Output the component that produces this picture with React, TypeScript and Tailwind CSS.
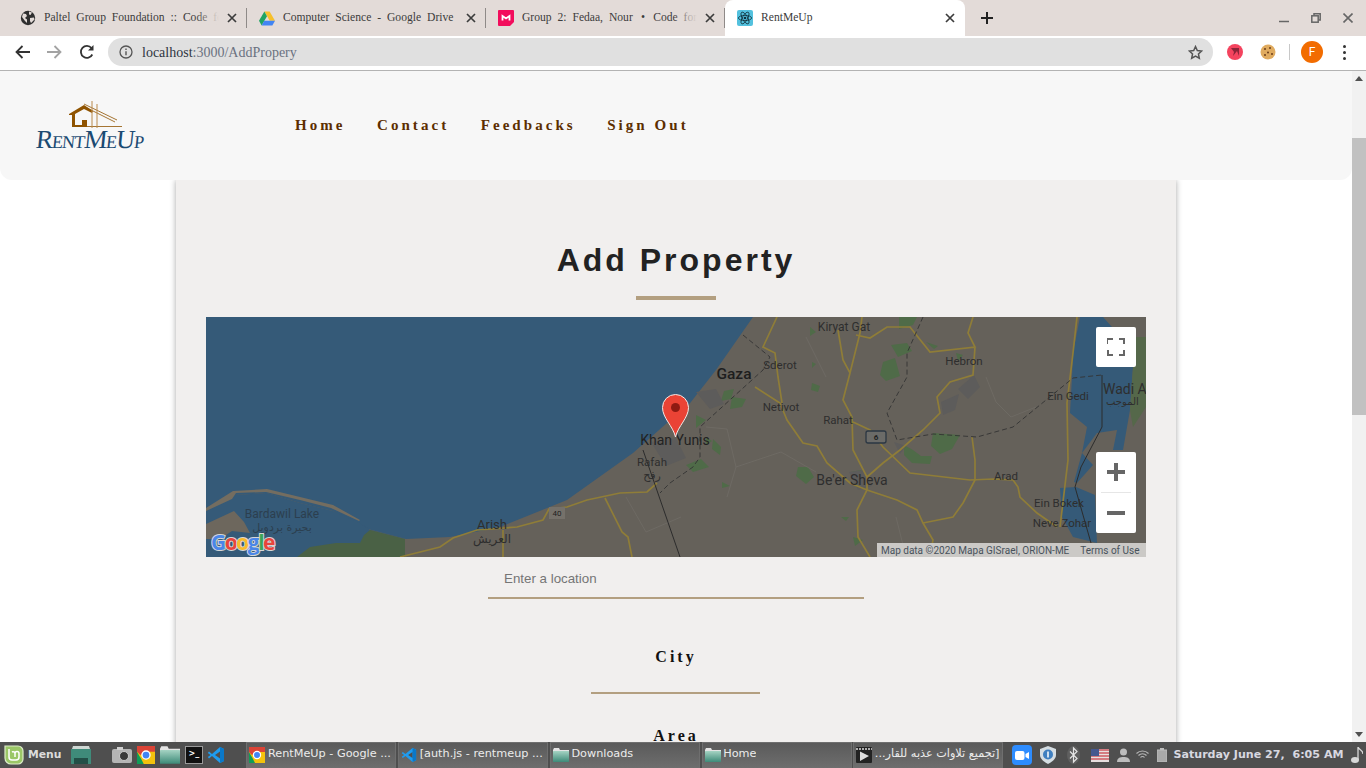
import React from 'react';

const serif = "font-['Liberation_Serif',serif]";

const CloseX = () => (
  <svg width="10" height="10" viewBox="0 0 10 10" className="shrink-0">
    <path d="M1 1l8 8M9 1l-8 8" stroke="#3c3c3c" strokeWidth="1.7" fill="none" />
  </svg>
);

const GlobeIcon = () => (
  <svg width="16" height="16" viewBox="0 0 16 16">
    <circle cx="8" cy="8" r="7.2" fill="#2f2f2f" />
    <path d="M3 3.500l3 .5 1 2-2 2 2 1.500v3.500L5 11 2 7zM9 1.500l3 1-1.500 2.500L9 4.500zM10 8l4-.5.5 2L11 13l-1-2z" fill="#e3dbd8" />
  </svg>
);

const DriveIcon = () => (
  <svg width="17" height="15" viewBox="0 0 17 15">
    <path d="M5.700 0h5.600l5.700 10h-5.600z" fill="#f6c02c" />
    <path d="M5.700 0L0 10l2.800 5 5.700-10z" fill="#1fa463" />
    <path d="M2.800 15h11.400l2.800-5H5.600z" fill="#4285f4" />
  </svg>
);

const MiroIcon = () => (
  <svg width="16" height="16" viewBox="0 0 16 16">
    <path d="M1 0h14a1 1 0 0 1 1 1v11l-4 4H1a1 1 0 0 1-1-1V1a1 1 0 0 1 1-1z" fill="#f20d5c" />
    <path d="M4.500 10.500V6L8 8.500 11.500 6v4.500" stroke="#fff" strokeWidth="1.800" fill="none" />
  </svg>
);

const ReactIcon = () => (
  <svg width="16" height="16" viewBox="0 0 16 16">
    <rect width="16" height="16" rx="2" fill="#53c1de" />
    <g fill="none" stroke="#10303c" strokeWidth="0.8">
      <ellipse cx="8" cy="8" rx="6.600" ry="2.600" />
      <ellipse cx="8" cy="8" rx="6.600" ry="2.600" transform="rotate(60 8 8)" />
      <ellipse cx="8" cy="8" rx="6.600" ry="2.600" transform="rotate(120 8 8)" />
    </g>
    <circle cx="8" cy="8" r="1.300" fill="#10303c" />
  </svg>
);

const ChromeIcon = ({ size = 16 }: { size?: number }) => (
  <svg width={size} height={size} viewBox="0 0 16 16">
    <rect width="16" height="16" fill="#f4c20d" />
    <path d="M0 0h16v5H8L3 8 0 5z" fill="#db4437" />
    <path d="M0 5l4 7 2 4H0z" fill="#0f9d58" />
    <circle cx="8" cy="8" r="3.600" fill="#4285f4" stroke="#fff" strokeWidth="1.200" />
  </svg>
);

const VsCodeIcon = ({ size = 18 }: { size?: number }) => (
  <svg width={size} height={size} viewBox="0 0 18 18">
    <path d="M13 1l4 2v12l-4 2-8-7-3 2.500L.8 11 3.500 9 .8 7 2 5.500 5 8z" fill="#1f9cf0" />
    <path d="M13 5.500L8 9l5 3.500z" fill="#4f4f4f" />
    <path d="M13 1l4 2v12l-4 2z" fill="#0a78c8" />
  </svg>
);

const FolderIcon = ({ w = 16, h = 14 }: { w?: number; h?: number }) => (
  <svg width={w} height={h} viewBox="0 0 16 14">
    <path d="M0 2l1-2h5l1 2h9v2H0z" fill="#e4e4e4" />
    <defs>
      <linearGradient id="folderGrad" x1="0" y1="0" x2="0" y2="1">
        <stop offset="0" stopColor="#a5d3c3" />
        <stop offset="1" stopColor="#3d8a78" />
      </linearGradient>
    </defs>
    <rect y="3" width="16" height="11" rx="0.500" fill="url(#folderGrad)" />
  </svg>
);

const Tab = ({ icon, title, active, fade }: { icon: React.ReactNode; title: string; active?: boolean; fade?: boolean }) => (
  <div className={`relative h-[36px] flex items-center pl-[12px] pr-[10px] ${active ? 'bg-white rounded-t-[8px] w-[240px]' : 'w-[239px]'}`}>
    <div className="w-[16px] h-[16px] shrink-0 flex items-center justify-center">{icon}</div>
    <div className="relative ml-[8px] mr-[6px] w-[176px] overflow-hidden whitespace-nowrap text-[11.6px] leading-[16px] pb-[1px] text-[#3c3c3c] [word-spacing:3px]">
      {title}
      {fade && <div className="absolute right-0 top-0 bottom-0 w-[24px] bg-gradient-to-r from-transparent to-[#e3dbd8]" />}
    </div>
    <div className="ml-[2px]">
      <CloseX />
    </div>
    {!active && <div className="absolute right-0 top-[8px] h-[20px] w-px bg-[#8f8a88]" />}
  </div>
);

const TabStrip = () => (
  <div className={`h-[36px] bg-[#e3dbd8] flex items-center pl-[8px] ${serif}`}>
    <Tab icon={<GlobeIcon />} title="Paltel Group Foundation :: Code for Everyone" fade />
    <Tab icon={<DriveIcon />} title="Computer Science - Google Drive" />
    <Tab icon={<MiroIcon />} title={'Group 2: Fedaa, Nour \u2009•\u2009 Code for Gaza'} fade />
    <Tab icon={<ReactIcon />} title="RentMeUp" active />
    <svg width="14" height="14" viewBox="0 0 14 14" className="ml-[15px] mr-auto">
      <path d="M7 1v12M1 7h12" stroke="#222" strokeWidth="2" />
    </svg>
    <div className="flex items-center gap-[22px] pr-[13px]">
      <svg width="10" height="10" viewBox="0 0 10 10"><path d="M0 8.500h10" stroke="#666" strokeWidth="1.500" /></svg>
      <svg width="10" height="10" viewBox="0 0 10 10" fill="none" stroke="#666" strokeWidth="1.500">
        <path d="M3 2.500V.8h6.200V7H7.500" />
        <rect x="0.800" y="2.800" width="6.400" height="6.400" />
      </svg>
      <svg width="10" height="10" viewBox="0 0 10 10"><path d="M.5.500l9 9M9.500.5l-9 9" stroke="#666" strokeWidth="1.600" /></svg>
    </div>
  </div>
);

const Toolbar = () => (
  <div className="h-[35px] pb-[2px] bg-white border-b border-[#b3b3b3] flex items-center">
    <div className="flex items-center pl-[15px] gap-[17px]">
      <svg width="15" height="14" viewBox="0 0 15 14" fill="none" stroke="#333" strokeWidth="1.800"><path d="M15 7H1.500M7.500 1l-6 6 6 6" /></svg>
      <svg width="15" height="14" viewBox="0 0 15 14" fill="none" stroke="#a3a3a3" strokeWidth="1.800"><path d="M0 7h13.500M7.500 1l6 6-6 6" /></svg>
      <svg width="16" height="16" viewBox="0 0 16 16" fill="none"><path d="M13.300 10.500A6 6 0 1 1 12.500 4" stroke="#333" strokeWidth="1.800" /><path d="M14.500 1v5.500H9z" fill="#333" /></svg>
    </div>
    <div className="ml-[13px] w-[1105px] h-[28px] rounded-full bg-[#e0e0e0] flex items-center pl-[11px] pr-[10px]">
      <svg width="14" height="14" viewBox="0 0 14 14" fill="none">
        <circle cx="7" cy="7" r="6" stroke="#555" strokeWidth="1.300" />
        <path d="M7 6.200v4M7 3.500v1.500" stroke="#555" strokeWidth="1.400" />
      </svg>
      <div className={`ml-[9px] text-[14px] text-[#6b7280] mr-auto ${serif}`}>
        <span className="text-[#2f3540]">localhost</span>:3000/AddPropery
      </div>
      <svg width="15" height="15" viewBox="0 0 24 24" fill="none" stroke="#555" strokeWidth="2.400">
        <path d="M12 2.500l2.900 6.300 6.900.8-5.100 4.700 1.400 6.800L12 17.700l-6.100 3.400 1.400-6.800L2.200 9.600l6.900-.8z" />
      </svg>
    </div>
    <div className="ml-[14px] w-[16px] h-[16px] rounded-full bg-[#f4435e] flex items-center justify-center">
      <svg width="10" height="10" viewBox="0 0 10 10"><path d="M1 1h8v8L7 4 3 9 4 5z" fill="#8c2438" /></svg>
    </div>
    <svg width="16" height="16" viewBox="0 0 16 16" className="ml-[17px]">
      <circle cx="8" cy="8" r="7.500" fill="#e0ab5f" />
      <circle cx="5" cy="5" r="1" fill="#6b3d1a" /><circle cx="10" cy="4" r="1" fill="#6b3d1a" />
      <circle cx="8" cy="8.500" r="1" fill="#6b3d1a" /><circle cx="12" cy="10" r="1" fill="#6b3d1a" />
      <circle cx="5" cy="11" r="1" fill="#6b3d1a" />
    </svg>
    <div className="ml-[13px] w-px h-[16px] bg-[#c8c8c8]" />
    <div className="ml-[11px] w-[22px] h-[22px] rounded-full bg-[#f26c00] text-white flex items-center justify-center text-[12px] font-['Roboto',sans-serif]">F</div>
    <div className="ml-[20px] flex flex-col gap-[3px]">
      <div className="w-[3px] h-[3px] rounded-full bg-[#333]" />
      <div className="w-[3px] h-[3px] rounded-full bg-[#333]" />
      <div className="w-[3px] h-[3px] rounded-full bg-[#333]" />
    </div>
  </div>
);

const Logo = () => (
  <div className="w-[108px] flex flex-col items-start">
    <svg width="56" height="31" viewBox="0 2 56 31" className="ml-[32px] -mb-[3px]">
      <path d="M1 15L16 6l9 6-1 2-8-4-9 5v11h7v-5h5v7H4V16H1z" fill="#8f5300" />
      <path d="M16 5l33 16M17 8l30 15M11 27.500h43" stroke="#8f5300" strokeWidth="0.800" fill="none" />
      <path d="M24 0v29M29 5v24" stroke="#b98a4d" strokeWidth="1" fill="none" />
    </svg>
    <div className="leading-[22px] text-[26px] text-[#1b4a72] font-['Liberation_Serif',serif] [font-variant:small-caps] -skew-x-6 tracking-[-1px] whitespace-nowrap">
      RentMeUp
    </div>
  </div>
);

const Header = () => (
  <div className="relative z-10 h-[109px] bg-[#f7f7f7] rounded-b-[12px] flex items-center pl-[36px]">
    <Logo />
    <nav className={`ml-[151px] flex gap-[31.5px] text-[15px] font-bold tracking-[3.05px] text-[#5c2e00] ${serif}`}>
      <span>Home</span>
      <span>Contact</span>
      <span>Feedbacks</span>
      <span>Sign Out</span>
    </nav>
  </div>
);

const MapView = () => (
  <div className="relative w-[940px] h-[240px] overflow-hidden">
    <svg width="940" height="240" viewBox="0 0 940 240" className="block">
      <rect width="940" height="240" fill="#65615a" />
      {/* sea */}
      <path d="M0 0H547L510 53 481 90 461 106 427 136 361 183 294 210 244 220 200 222 154 210 127 194 94 186 61 176 27 178 0 194z" fill="#355a78" />
      <path d="M0 194L27 178 61 176 94 186 127 194 154 206 164 213 199 222V240H0z" fill="#355a78" />
      {/* land around the lagoon */}
      <path d="M0 191L27 174 61 172 94 180 127 188 154 203 153 204 125 191 94 183 60 175 30 176 26 182 0 194z" fill="#746d60" />
      <path d="M0 207L28 194 38 205 44 216 26 214 14 222 0 222z" fill="#6d675d" />
      <path d="M164 213L199 222V240H91L104 230 130 226 154 226 158 218z" fill="#4a6145" />
      {/* dead sea */}
      <path d="M874 0H897L906 10V45L927 50 924 93 917 133H890L876 136 881 110 864 96 866 60 867 36z" fill="#355a78" />
      <path d="M891 116L911 113 907 133 887 148 872 165 876 136z" fill="#65615a" />
      <path d="M876 136L887 148 871 166 868 165zM854 171L870 170 889 178 891 226 867 220 856 200z" fill="#355a78" />
      <path d="M927 20H940V90L927 110 924 93 927 50z" fill="#55684a" />
      {/* green areas */}
      <g fill="#4f6b48">
        <path d="M677 45l12-4 5 18-14 5-6-6zM685 28l16-2 5 8-14 6zM693 0h18l-4 8-14 4z" />
        <path d="M727 116l27 2-8 14-12 5-9-8zM698 128l9 5 8 6 11 0-2 8-18-1-8-8z" />
        <path d="M592 150l10 0 6 10-8 7-10-8zM518 74l10-2-3 10-10 2zM480 148l15-6 8 8-16 5zM490 98l10 5-10 8zM606 66l8 3-2 6-7-2zM604 10l6 5-6 4zM645 155l10-2 5 8-10 3zM507 122l8 8-1 8-8-6zM635 200l8 0-3 4zM647 220l10 3-8 6z" />
        <path d="M526 80l14 2-4 8-12 2zM500 120l6 4-6 4zM516 165l8 4-8 2zM606 45l4 2-4 4zM720 25l12 4-4 3zM750 36l7 2-5 6z" />
      </g>
      {/* built up grey */}
      <g fill="#5d5c5b">
        <path d="M490 75l20-3 8 15-14 5zM445 125l25-4 10 20-20 8zM643 155l15-2 8 16-14 4zM735 85l18-8-4 16-12 5zM752 72l16-14 6 12-12 12zM688 125l12 4-6 8z" />
      </g>
      {/* minor roads */}
      <g fill="none" stroke="#706c66" strokeWidth="0.800">
        <path d="M500 110L521 112 530 150 521 180M530 150L575 135 610 155M780 60L790 85 805 100 830 90M420 180L440 215 475 200M600 20L620 60M690 200L700 240" />
      </g>
      {/* roads */}
      <g fill="none" stroke="#8f7d38" strokeWidth="1.700">
        <path d="M549 70L574 86 581 103 597 126 611 129 621 146 644 166 661 173 691 183 711 193 717 206 727 223 724 240" />
        <path d="M571 0L557 30 569 36 572 60 576 86" />
        <path d="M632 13L637 43 644 56 654 16 656 0M644 56L637 83 646 100 647 133 661 160 661 173 651 193 652 220 664 240" />
        <path d="M647 105L664 113 677 130 704 156 764 163 787 162 807 163 812 170 814 180 831 196 851 210" />
        <path d="M767 0L762 16 769 30 724 35 704 10 681 10 664 21 650 18M769 30L767 58 744 65 731 80 734 96 717 113 694 133 677 146 661 160" />
        <path d="M766 120L769 143 769 163 757 186 747 200 717 206" />
        <path d="M871 0L867 36 861 86 862 143 854 210" />
        <path d="M194 240L234 230 247 221 271 213 311 210 337 203 343 192 361 190 381 183 414 176 441 175 451 166" />
        <path d="M399 181L416 215 422 220 426 240M297 213V240" />
      </g>
      {/* borders */}
      <path d="M437 133L474 240" stroke="#2c2c2c" strokeWidth="1" fill="none" />
      <path d="M896 58V110L875 150 869 170 885 226" stroke="#2c2c2c" strokeWidth="1" fill="none" />
      <g fill="none" stroke="#333" strokeWidth="0.900" strokeDasharray="5 3">
        <path d="M537 18L564 40 557 53 494 110 494 140 487 150 464 166 454 176" />
        <path d="M717 0L701 36 701 60 681 96 691 123 727 117 771 120 807 110 867 61 896 58" />
      </g>
      {/* labels */}
      <g fontFamily="Roboto, sans-serif" fill="#2e2e2e" textAnchor="middle">
        <text x="638" y="14" fontSize="12">Kiryat Gat</text>
        <text x="574" y="52" fontSize="11.500">Sderot</text>
        <text x="528" y="62" fontSize="15.500" fontWeight="500" fill="#1e1e1e">Gaza</text>
        <text x="758" y="48" fontSize="11.500">Hebron</text>
        <text x="575" y="94" fontSize="11.500">Netivot</text>
        <text x="632" y="107" fontSize="11.500">Rahat</text>
        <text x="646" y="168" fontSize="14">Be&apos;er Sheva</text>
        <text x="800" y="163" fontSize="11.500">Arad</text>
        <text x="862" y="83" fontSize="11.500">Ein Gedi</text>
        <text x="853" y="190" fontSize="11.500">Ein Bokek</text>
        <text x="856" y="210" fontSize="11.500">Neve Zohar</text>
        <text x="469" y="128" fontSize="14" fill="#222">Khan Yunis</text>
        <text x="446" y="149" fontSize="11.500">Rafah</text>
        <text x="446" y="162" fontSize="11" fontFamily="'DejaVu Sans', sans-serif">رفح</text>
        <text x="286" y="212" fontSize="13">Arish</text>
        <text x="286" y="226" fontSize="12" fontFamily="'DejaVu Sans', sans-serif">العريش</text>
        <text x="76" y="201" fontSize="12" fill="#2c3f4f">Bardawil Lake</text>
        <text x="76" y="214" fontSize="11" fill="#2c3f4f" fontFamily="'DejaVu Sans', sans-serif">بحيرة بردويل</text>
        <text x="897" y="77" fontSize="14" textAnchor="start">Wadi A</text>
        <text x="900" y="88" fontSize="10" textAnchor="start" fontFamily="'DejaVu Sans', sans-serif">الموجب</text>
      </g>
      {/* route shields */}
      <rect x="343" y="190" width="16" height="12" fill="#75716a" />
      <text x="351" y="199" fontSize="8" textAnchor="middle" fontFamily="Roboto, sans-serif" fill="#222">40</text>
      <rect x="660" y="114" width="20" height="12" rx="2" fill="#6b6b68" stroke="#2b3743" strokeWidth="1.300" />
      <text x="670" y="123" fontSize="8" textAnchor="middle" fontFamily="Roboto, sans-serif" fontWeight="700" fill="#222">6</text>
      {/* marker */}
      <path d="M469.500 120C467 109 456.500 101 456.500 90.500A13 13 0 0 1 482.500 90.500C482.500 101 472 109 469.500 120z" fill="#ea4335" stroke="#f4e9e6" strokeWidth="1" />
      <circle cx="469.500" cy="90.500" r="4.500" fill="#8e1a12" />
      {/* google logo */}
      <text x="5" y="233" fontSize="21" fontWeight="700" fontFamily="'Open Sans', sans-serif" stroke="#d6d6d6" strokeWidth="2" paintOrder="stroke" letterSpacing="-1.500">
        <tspan fill="#4a86e8">G</tspan>
        <tspan fill="#e8453c">o</tspan>
        <tspan fill="#f9bb2d">o</tspan>
        <tspan fill="#4a86e8">g</tspan>
        <tspan fill="#3aa757">l</tspan>
        <tspan fill="#e8453c">e</tspan>
      </text>
    </svg>
    <div className="absolute right-0 bottom-0 w-[269px] h-[14px] bg-[#cbc9c6] flex items-center pl-[4px] text-[10px] text-[#48525c] font-['Roboto',sans-serif] whitespace-nowrap">
      <span>Map data ©2020 Mapa GISrael, ORION-ME</span>
      <span className="ml-[11px]">Terms of Use</span>
    </div>
    <div className="absolute right-[10px] top-[10px] w-[40px] h-[40px] bg-white rounded-[2px] flex items-center justify-center">
      <svg width="18" height="18" viewBox="0 0 18 18" fill="none" stroke="#666" strokeWidth="2">
        <path d="M0 6V1h6M12 1h5v5M17 12v5h-5M6 17H1v-5" />
      </svg>
    </div>
    <div className="absolute right-[10px] top-[135px] w-[40px] h-[81px] bg-white rounded-[2px] flex flex-col items-center">
      <div className="h-[40px] flex items-center justify-center">
        <svg width="18" height="18" viewBox="0 0 18 18"><path d="M9 0v18M0 9h18" stroke="#666" strokeWidth="4" /></svg>
      </div>
      <div className="w-[30px] h-px bg-[#e6e6e6]" />
      <div className="h-[40px] flex items-center justify-center">
        <svg width="18" height="18" viewBox="0 0 18 18"><path d="M0 9h18" stroke="#666" strokeWidth="4" /></svg>
      </div>
    </div>
  </div>
);

const Card = () => (
  <div className="ml-[176px] w-[1000px] bg-[#f1efee] shadow-[0_0_6px_rgba(0,0,0,0.35)] flex flex-col items-center">
    <h1 className="mt-[59px] text-[32px] leading-[42px] font-bold tracking-[3px] text-[#222] font-['Liberation_Sans',sans-serif]">Add Property</h1>
    <div className="mt-[15px] w-[80px] h-[4px] bg-[#b39f80]" />
    <div className="mt-[17px]">
      <MapView />
    </div>
    <input
      placeholder="Enter a location"
      className="w-[376px] h-[42px] pl-[16px] pt-[3px] bg-transparent border-b-2 border-[#b39f80] text-[13.33px] placeholder:text-[#757575] outline-none font-['Liberation_Sans',sans-serif]"
    />
    <div className={`mt-[48px] text-[16px] leading-[20px] font-bold tracking-[3px] text-[#111] ${serif}`}>City</div>
    <div className="mt-[25px] mr-[2px] w-[169px] h-[2px] bg-[#b39f80]" />
    <div className={`mt-[32px] text-[16px] leading-[20px] font-bold tracking-[3px] text-[#111] ${serif}`}>Area</div>
    <div className="h-[60px]" />
  </div>
);

const Scrollbar = () => (
  <div className="w-[14px] shrink-0 bg-[#f1f1f1] flex flex-col items-center">
    <svg width="8" height="5" viewBox="0 0 8 5" className="mt-[5px] shrink-0"><path d="M0 5L4 0l4 5z" fill="#505050" /></svg>
    <div className="mt-[57px] w-full h-[277px] bg-[#c1c1c1] shrink-0" />
    <svg width="8" height="5" viewBox="0 0 8 5" className="mt-auto mb-[5px] shrink-0"><path d="M0 0l4 5 4-5z" fill="#505050" /></svg>
  </div>
);

const WindowButton = ({ icon, label, rtl }: { icon: React.ReactNode; label: string; rtl?: boolean }) => (
  <div className="w-[150px] h-[26px] shrink-0 flex items-center pl-[2px] pr-[3px] pb-[2px] gap-[2.5px] border border-[#6f6f6f] border-b-0 bg-gradient-to-b from-[#5a5a5a] to-[#6e6e6e] overflow-hidden whitespace-nowrap text-[11.25px] text-[#ececec]">
    <div className="w-[16px] flex justify-center shrink-0">{icon}</div>
    <span dir={rtl ? 'rtl' : undefined} className="overflow-hidden">{label}</span>
  </div>
);

const Taskbar = () => (
  <div className="h-[26px] bg-[#4f4f4f] flex items-center font-['DejaVu_Sans',sans-serif] relative z-20">
    <svg width="20" height="20" viewBox="0 0 20 20" className="ml-[4px]">
      <path d="M1 1h13a5 5 0 0 1 5 5v8a5 5 0 0 1-5 5H7a6 6 0 0 1-6-6z" fill="#9bc767" stroke="#dcecc8" strokeWidth="1.200" />
      <path d="M5 4v8a3 3 0 0 0 3 3h4a3 3 0 0 0 3-3V8.500a2 2 0 0 0-4 0V12M11 8.500a2 2 0 0 0-3-1.500" stroke="#fff" strokeWidth="1.500" fill="none" />
    </svg>
    <span className="ml-[4px] text-[10.8px] font-bold text-[#dcdcdc]">Menu</span>
    <svg width="22" height="18" viewBox="0 0 22 18" className="ml-[9px]">
      <path d="M3 0h16l1 3H2z" fill="#cfd8d4" />
      <rect x="1" y="3" width="20" height="15" fill="#3f8b7a" />
      <rect x="4" y="12" width="14" height="6" fill="#234f47" />
    </svg>
    <svg width="20" height="16" viewBox="0 0 20 16" className="ml-[20px]">
      <rect y="2" width="20" height="14" rx="2" fill="#b5b5b5" />
      <rect x="5" y="0" width="6" height="3" fill="#d0d0d0" />
      <circle cx="12" cy="9" r="4.500" fill="#3a3a3a" stroke="#dcdcdc" strokeWidth="0.800" />
    </svg>
    <div className="ml-[5px]"><ChromeIcon size={18} /></div>
    <div className="ml-[5px]"><FolderIcon w={20} h={18} /></div>
    <div className="ml-[5px] w-[18px] h-[18px] bg-[#111] border border-[#9a9a9a] text-[8px] leading-[14px] pl-[2px] text-white font-bold">&gt;_</div>
    <div className="ml-[4px]"><VsCodeIcon /></div>
    <div className="ml-[21px] flex items-center gap-[1.750px]">
      <WindowButton icon={<ChromeIcon />} label="RentMeUp - Google ..." />
      <WindowButton icon={<VsCodeIcon size={16} />} label="[auth.js - rentmeup ..." />
      <WindowButton icon={<FolderIcon />} label="Downloads" />
      <WindowButton icon={<FolderIcon />} label="Home" />
      <WindowButton
        icon={
          <svg width="16" height="16" viewBox="0 0 16 16">
            <rect width="16" height="16" rx="1" fill="#222" />
            <path d="M0 2h16" stroke="#ddd" strokeWidth="1.500" strokeDasharray="2 1" />
            <path d="M4 4.500l9 4.500-9 5z" fill="#ddd" />
          </svg>
        }
        label="[تجميع تلاوات عذبه للقار..."
        rtl
      />
    </div>
    <div className="ml-[9px] w-[20px] h-[20px] rounded-[4px] bg-[#2d8cff] flex items-center justify-center">
      <svg width="14" height="9" viewBox="0 0 14 9"><rect width="9.500" height="9" rx="2" fill="#fff" /><path d="M10.500 3L14 1v7l-3.500-2z" fill="#fff" /></svg>
    </div>
    <svg width="16" height="18" viewBox="0 0 16 18" className="ml-[8px]">
      <path d="M8 0l8 3v6c0 4-4 7-8 9-4-2-8-5-8-9V3z" fill="#d5dde2" />
      <circle cx="8" cy="8.500" r="5" fill="#3f7fc0" />
      <path d="M8 5.500v6" stroke="#fff" strokeWidth="1.500" />
    </svg>
    <svg width="13" height="18" viewBox="0 0 13 18" className="ml-[11px]">
      <ellipse cx="6.500" cy="9" rx="6.500" ry="9" fill="#5f5f5f" />
      <path d="M3 5.500l7 7-3.500 3.500V2L10 5.500l-7 7" stroke="#e5e5e5" strokeWidth="1.200" fill="none" />
    </svg>
    <svg width="18" height="13" viewBox="0 0 18 13" className="ml-[11px]">
      <rect width="18" height="13" fill="#e8e0e0" />
      <path d="M0 1h18M0 4h18M0 7h18M0 10h18" stroke="#cd5a62" strokeWidth="1.500" />
      <rect width="8" height="7" fill="#45588f" />
    </svg>
    <svg width="13" height="14" viewBox="0 0 13 14" className="ml-[8px]">
      <circle cx="6.500" cy="4" r="3.500" fill="#bdbdbd" />
      <path d="M0 14c0-4 3-5 6.500-5s6.500 1 6.500 5z" fill="#bdbdbd" />
    </svg>
    <svg width="13" height="10" viewBox="0 0 13 10" fill="none" stroke="#b5b5b5" strokeWidth="1.200" className="ml-[6px]">
      <path d="M.5 3.500a8.500 8.500 0 0 1 12 0M2.500 5.500a5.500 5.500 0 0 1 8 0M4.500 7.500a2.500 2.500 0 0 1 4 0" />
    </svg>
    <svg width="10" height="14" viewBox="0 0 10 14" className="ml-[8px]">
      <rect x="3" width="4" height="2" fill="#bdbdbd" />
      <rect y="2" width="10" height="12" fill="#a9a9a9" stroke="#bdbdbd" />
    </svg>
    <span className="ml-[6px] text-[11.1px] font-bold text-[#d8d8e0] whitespace-pre">Saturday June 27,  6:05 AM</span>
    <svg width="12" height="16" viewBox="0 0 12 16" className="ml-[7px]">
      <ellipse cx="4" cy="13" rx="4" ry="3" fill="#d8d8d8" />
      <path d="M7 13V0c1 3 5 3 5 7" stroke="#d8d8d8" strokeWidth="1.300" fill="none" />
    </svg>
  </div>
);

const App = () => {
  return (
    <div className="w-full h-screen flex flex-col overflow-hidden bg-white">
      <TabStrip />
      <Toolbar />
      <div className="flex-1 min-h-0 flex overflow-hidden">
        <div className="flex-1 min-w-0 overflow-hidden">
          <Header />
          <Card />
        </div>
        <Scrollbar />
      </div>
      <Taskbar />
    </div>
  );
};

export default App;
